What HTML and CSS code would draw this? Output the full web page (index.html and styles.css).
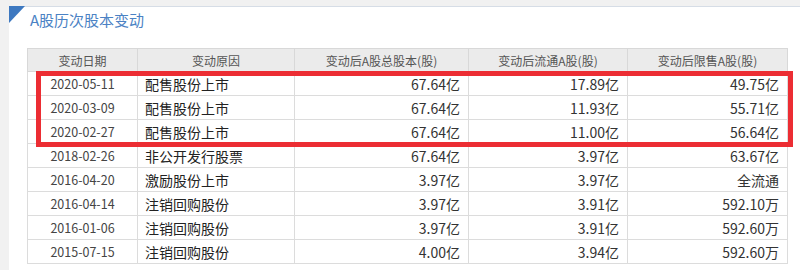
FILE: index.html
```html
<!DOCTYPE html>
<html lang="zh">
<head>
<meta charset="utf-8">
<link rel="stylesheet" href="styles.css">
</head>
<body>
<div class="panel">
  <div class="title">A股历次股本变动</div>
  <table class="grid">
    <colgroup>
      <col class="c1"><col class="c2"><col class="c3"><col class="c4"><col class="c5">
    </colgroup>
    <thead>
      <tr><th>变动日期</th><th>变动原因</th><th>变动后A股总股本(股)</th><th>变动后流通A股(股)</th><th>变动后限售A股(股)</th></tr>
    </thead>
    <tbody>
      <tr><td class="d">2020-05-11</td><td class="r">配售股份上市</td><td class="n">67.64亿</td><td class="n">17.89亿</td><td class="n">49.75亿</td></tr>
      <tr><td class="d">2020-03-09</td><td class="r">配售股份上市</td><td class="n">67.64亿</td><td class="n">11.93亿</td><td class="n">55.71亿</td></tr>
      <tr><td class="d">2020-02-27</td><td class="r">配售股份上市</td><td class="n">67.64亿</td><td class="n">11.00亿</td><td class="n">56.64亿</td></tr>
      <tr><td class="d">2018-02-26</td><td class="r">非公开发行股票</td><td class="n">67.64亿</td><td class="n">3.97亿</td><td class="n">63.67亿</td></tr>
      <tr><td class="d">2016-04-20</td><td class="r">激励股份上市</td><td class="n">3.97亿</td><td class="n">3.97亿</td><td class="n">全流通</td></tr>
      <tr><td class="d">2016-04-14</td><td class="r">注销回购股份</td><td class="n">3.97亿</td><td class="n">3.91亿</td><td class="n">592.10万</td></tr>
      <tr><td class="d">2016-01-06</td><td class="r">注销回购股份</td><td class="n">3.97亿</td><td class="n">3.91亿</td><td class="n">592.60万</td></tr>
      <tr><td class="d">2015-07-15</td><td class="r">注销回购股份</td><td class="n">4.00亿</td><td class="n">3.94亿</td><td class="n">592.60万</td></tr>
    </tbody>
  </table>
</div>
<div class="highlight"></div>
</body>
</html>
```
FILE: styles.css
```css
html, body {
  margin: 0;
  padding: 0;
  background: #f1f1f1;
  font-family: "Noto Sans CJK SC", "Microsoft YaHei", sans-serif;
  color: #333;
  overflow: hidden;
}
.panel {
  position: relative;
  margin: 6px 0 0 9px;
  background: #fff;
  border-top: 1px solid #d6dde6;
  height: 270px;
}
.panel::before {
  content: "";
  position: absolute;
  left: 0;
  top: -1px;
  width: 0;
  height: 0;
  border-top: 17px solid #3d78c0;
  border-right: 16px solid transparent;
}
.title {
  padding: 3px 0 0 21px;
  height: 26px;
  font-size: 15px;
  line-height: 20px;
  color: #4b82c4;
}
.grid {
  margin: 12px 0 0 18px;
  border-collapse: collapse;
  table-layout: fixed;
  width: 760px;
  border: 1px solid #d5d5d5;
}
.c1 { width: 110px; }
.c2 { width: 157px; }
.c3 { width: 174px; }
.c4 { width: 159px; }
.c5 { width: 160px; }
.grid th {
  height: 22px;
  padding: 0;
  background: #ebebeb;
  font-weight: normal;
  font-size: 12px;
  color: #555;
  border: 1px solid #d8d8d8;
}
.grid td {
  height: 23px;
  padding: 0;
  border: 1px solid #dcdcdc;
  white-space: nowrap;
}
.d {
  text-align: center;
  font-size: 12.5px;
  color: #444;
}
.r {
  padding-left: 7px !important;
  font-size: 14px;
  color: #222;
}
.n {
  text-align: right;
  padding-right: 8px !important;
  font-size: 14px;
  color: #333;
}
.highlight {
  position: absolute;
  left: 36px;
  top: 71px;
  width: 747px;
  height: 66px;
  border: 5px solid #ec2d33;
}
```
